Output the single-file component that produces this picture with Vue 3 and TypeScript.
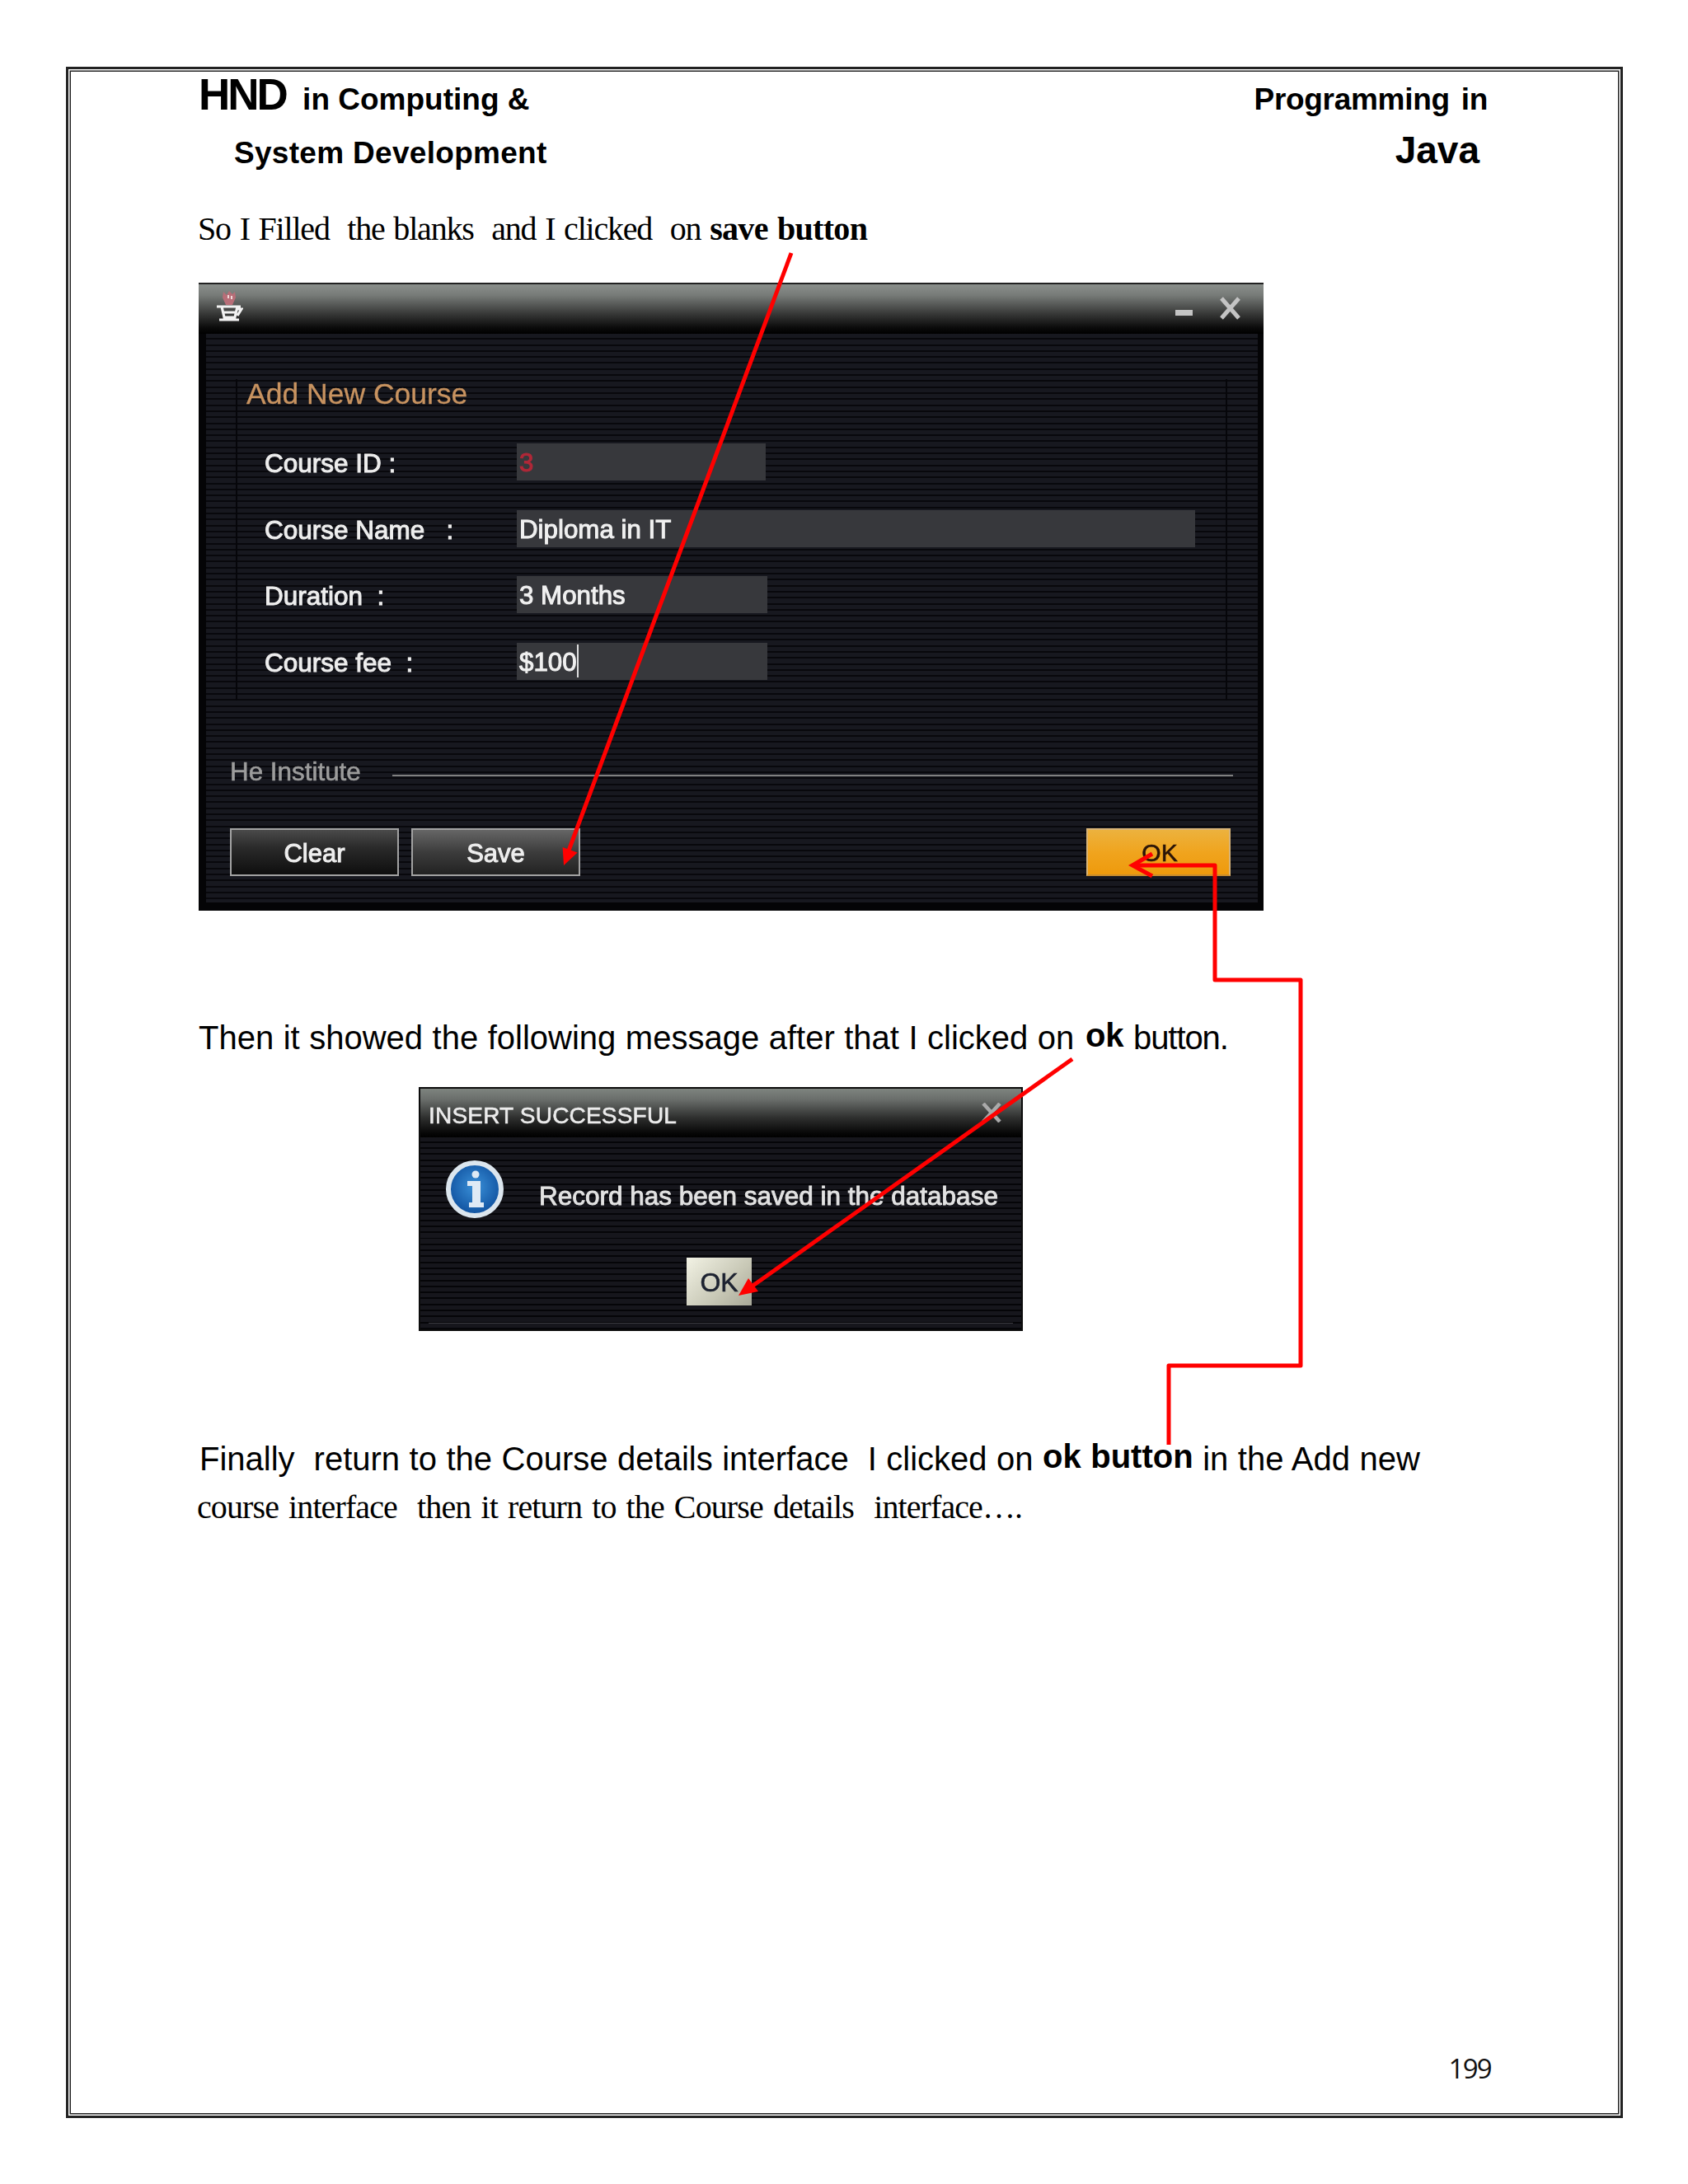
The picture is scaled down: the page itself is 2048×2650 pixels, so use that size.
<script setup lang="ts">
interface Field { label: string; value: string; kind: string }
const fields: Field[] = [
  { label: 'Course ID :', value: '3', kind: 'id' },
  { label: 'Course Name   :', value: 'Diploma in IT', kind: 'wide' },
  { label: 'Duration  :', value: '3 Months', kind: 'plain' },
  { label: 'Course fee  :', value: '$100', kind: 'caret' },
]
const line1 = 'So I Filled  the blanks  and I clicked  on '
const line3 = 'Finally  return to the Course details interface  I clicked on '
const line4 = 'course interface  then it return to the Course details  interface….'
</script>

<template>
  <div class="page">
    <div class="frame">
      <header class="head">
        <div class="hl1"><span class="hnd">HND</span><span class="hs"> in Computing &amp;</span></div>
        <div class="hr1">Programming in</div>
        <div class="hl2">System Development</div>
        <div class="hr2">Java</div>
      </header>

      <main class="body">
        <p class="serif p1">{{ line1 }}<b>save button</b></p>

        <section class="win">
          <div class="bar">
            <svg class="cup" viewBox="0 0 32 40" width="32" height="40">
              <path d="M8 2l4 4 3-5 4 4 3-3 1 7-4 9h-8l-4-9z" fill="#b86e78" />
              <path d="M13 6h2v4h-2zM17 7h2v4h-2z" fill="#f0d8d8" />
              <path d="M0 20H29M6 20l3 13h13l3-13M25 23h5l-5 8M9 27h13M3 36h24" stroke="#f2f2f2" stroke-width="3.200" fill="none" />
            </svg>
            <div class="ctrls">
              <span class="min"></span>
              <svg width="27" height="28" viewBox="0 0 27 28"><path d="M3 2l21 24M24 2L3 26" stroke="#c4c4c4" stroke-width="5" /></svg>
            </div>
          </div>
          <div class="win-body">
            <div class="fs">
              <h2 class="legend">Add New Course</h2>
              <div class="rows">
                <div v-for="f in fields" :key="f.label" class="row">
                  <span class="lab">{{ f.label }}</span>
                  <span class="inp" :class="f.kind"><span class="val">{{ f.value }}</span></span>
                </div>
              </div>
            </div>
            <div class="inst"><span>He Institute</span><i></i></div>
            <div class="btns">
              <span class="btn clear">Clear</span>
              <span class="btn save">Save</span>
              <span class="btn ok">OK</span>
            </div>
          </div>
        </section>

        <p class="sans p2">Then it showed the following message after that I clicked on <b class="up ok2">ok</b> <span class="tight">button.</span></p>

        <section class="dlg">
          <div class="dbar">
            <span>INSERT SUCCESSFUL</span>
            <svg width="24" height="24" viewBox="0 0 24 24"><path d="M2 1l20 22M22 1L2 23" stroke="#aaa" stroke-width="4.500" /></svg>
          </div>
          <div class="msg">
            <svg class="info" viewBox="0 0 70 70" width="70" height="70">
              <defs>
                <radialGradient id="ib" cx="50%" cy="45%" r="55%">
                  <stop offset="0" stop-color="#3a90d8" />
                  <stop offset="1" stop-color="#0f509e" />
                </radialGradient>
              </defs>
              <ellipse cx="35" cy="35" rx="32" ry="32" fill="url(#ib)" stroke="#dce6ee" stroke-width="6" />
              <circle cx="36" cy="17" r="4.500" fill="#dfeaf5" />
              <path d="M26 25h16v26h4v6H28v-6h4V31h-6z" fill="#dfeaf5" />
            </svg>
            <span>Record has been saved in the database</span>
          </div>
          <span class="dok">OK</span>
          <div class="dfoot"></div>
        </section>

        <p class="sans p3">{{ line3 }}<b class="up">ok button</b> in the Add new</p>
        <p class="serif p4">{{ line4 }}</p>
      </main>

      <footer class="pn">199</footer>
    </div>

    <svg class="arrows" width="2048" height="2650" viewBox="0 0 2048 2650">
      <path d="M960 307L690 1032" stroke="#f00" stroke-width="5" fill="none" />
      <path d="M684 1050l-1.400-22 18 6.500z" fill="#f00" />
      <path d="M1418 1753V1657H1578V1189H1474V1050H1376" stroke="#f00" stroke-width="5" fill="none" stroke-linejoin="round" />
      <path d="M1398 1036l-24 14 24 13" stroke="#f00" stroke-width="5" fill="none" />
      <path d="M1301 1285L912 1561" stroke="#f00" stroke-width="5" fill="none" />
      <path d="M896 1572l12-21 12 16z" fill="#f00" />
    </svg>
  </div>
</template>

<style>
html, body { margin: 0; background: #fff; }
</style>

<style scoped>
.page {
  position: relative;
  width: 2048px;
  height: 2650px;
  background: #fff;
  color: #000;
  padding: 81px 0 0 80px;
  box-sizing: border-box;
  font-family: "Liberation Sans", Arial, sans-serif;
}
.frame {
  width: 1889px;
  height: 2489px;
  box-sizing: border-box;
  border: 3px solid #222;
  padding: 3px;
  box-shadow: inset 0 0 0 1.500px #fff, inset 0 0 0 3px #222;
  display: flex;
  flex-direction: column;
}
.head {
  display: grid;
  grid-template-columns: 1fr auto;
  align-items: baseline;
  row-gap: 18px;
  padding: 1px 158px 0 158px;
  font-weight: 700;
  font-size: 37px;
  line-height: 37px;
}
.hl1, .hr1, .hl2, .hr2 { white-space: pre; }
.hnd { font-size: 53px; line-height: 53px; letter-spacing: -3px; margin: 0 10px 0 -3px; }
.hl2 { padding-left: 40px; letter-spacing: 0.3px; }
.hr1 { justify-self: end; word-spacing: 4px; letter-spacing: -0.3px; }
.hr2 { justify-self: end; margin-right: 10px; font-size: 46px; line-height: 46px; }
.body { padding: 0 0 0 154px; }
p { margin: 0; white-space: pre; }
.serif { font-family: "Liberation Serif", "Times New Roman", serif; font-size: 40px; line-height: 44px; }
.sans { font-family: "Liberation Sans", Arial, sans-serif; font-size: 40px; line-height: 44px; }
.up { position: relative; top: -3px; }
.p1 { margin-top: 51px; letter-spacing: -1.200px; word-spacing: 2px; }
.p1 b { letter-spacing: -0.7px; }
.p2 { margin-top: 132px; margin-left: 1px; word-spacing: 0.4px; }
.ok2 { margin-left: 2px; }
.tight { letter-spacing: -1.100px; }
.p3 { margin-top: 133px; margin-left: 2px; word-spacing: 0.4px; }
.p4 { margin-top: 15px; margin-left: -1px; letter-spacing: -0.9px; word-spacing: 3px; }

.win {
  margin: 43px 0 0 1px;
  width: 1292px;
  height: 762px;
  box-sizing: border-box;
  background: #0a0a0e;
  border-top: 2px solid #222;
  color: #e6e6e6;
  filter: blur(0.6px);
  display: flex;
  flex-direction: column;
}
.bar {
  height: 60px;
  flex: none;
  display: flex;
  justify-content: space-between;
  align-items: flex-start;
  padding: 7px 27px 0 22px;
  box-sizing: border-box;
  background: linear-gradient(#8a8f8b 0, #777b78 22%, #3a3b3a 58%, #0a0a0a 88%, #000 100%);
}
.ctrls { display: flex; align-items: flex-start; gap: 32px; padding-top: 8px; }
.min { width: 21px; height: 7px; background: #c4c4c4; margin-top: 16px; }
.win-body {
  flex: 1;
  box-sizing: border-box;
  border-left: 9px solid #040406;
  border-right: 7px solid #040406;
  border-bottom: 10px solid #040406;
  padding: 0 30px 0 29px;
  background: repeating-linear-gradient(#17181f 0 5.300px, #08080c 5.300px 7.300px);
}
.fs {
  margin: 55px 7px 0;
  height: 390px;
  box-sizing: border-box;
  border-left: 2px solid #06060a;
  border-right: 2px solid #06060a;
  padding-left: 11px;
}
.legend {
  margin: 0;
  padding-top: 1px;
  font-size: 35.500px;
  line-height: 35px;
  font-weight: 400;
  color: #c89360;
  -webkit-text-stroke: 0.3px #c89360;
}
.rows {
  margin-top: 42px;
  padding-left: 22px;
  display: flex;
  flex-direction: column;
  gap: 35.500px;
}
.row { display: flex; align-items: center; height: 45px; }
.lab {
  width: 306px;
  flex: none;
  padding-top: 4px;
  font-size: 31.500px;
  white-space: pre;
  color: #eee;
  -webkit-text-stroke: 1px #eee;
}
.inp {
  height: 45px;
  width: 304px;
  box-sizing: border-box;
  background: #37383c;
  font-size: 31.300px;
  line-height: 48px;
  padding-left: 3px;
  color: #f0f0f0;
  -webkit-text-stroke: 1px #f0f0f0;
}
.inp.id { width: 302px; color: #b02838; -webkit-text-stroke: 1px #b02838; }
.inp.wide { width: 823px; }
.inp.caret .val { display: inline-block; height: 40px; line-height: 44px; border-right: 2px solid #ddd; }
.inst {
  margin-top: 72px;
  display: flex;
  align-items: center;
  gap: 38px;
  font-size: 31.400px;
  line-height: 30px;
  color: #9c9c9c;
  -webkit-text-stroke: 0.6px #9c9c9c;
}
.inst i { flex: 1; height: 2px; background: #808080; margin-top: 8px; }
.btns { margin-top: 53px; display: flex; gap: 15px; }
.btn {
  height: 58px;
  width: 205px;
  box-sizing: border-box;
  border: 2px solid #a2a2a2;
  font-size: 31px;
  line-height: 58px;
  text-align: center;
  color: #eee;
  -webkit-text-stroke: 1px #eee;
}
.clear { background: linear-gradient(#4a4a4a, #2a2a2a 40%, #0e0e0e); }
.save { background: linear-gradient(#666, #3c3c3c 50%, #222); }
.ok {
  margin: 0 3px 0 auto;
  width: 175px;
  padding-left: 3px;
  border: 2px solid #d8b478;
  border-bottom-color: #c98d2c;
  background: linear-gradient(#ecb23e, #f0a41e 50%, #ee9a0c);
  color: #2a1408;
  -webkit-text-stroke: 0.6px #2a1408;
  font-size: 30px;
  line-height: 56px;
}

.dlg {
  margin: 38px 0 0 268px;
  width: 733px;
  height: 296px;
  box-sizing: border-box;
  border: 2px solid #0c0c0c;
  background: repeating-linear-gradient(#16161c 0 5.300px, #050508 5.300px 7.300px);
  color: #e2e2e2;
  filter: blur(0.6px);
}
.dbar {
  height: 59px;
  box-sizing: border-box;
  padding: 19px 24px 0 10px;
  display: flex;
  justify-content: space-between;
  align-items: flex-start;
  background: linear-gradient(#7e847f 0, #6a6e6b 22%, #2e2f2e 60%, #060606 92%, #000);
  font-size: 28px;
  line-height: 28px;
  letter-spacing: 0.2px;
  color: #ececec;
  -webkit-text-stroke: 0.6px #ececec;
}
.dbar svg { margin-top: -2px; }
.msg {
  margin-top: 28px;
  padding-left: 31px;
  height: 70px;
  display: flex;
  align-items: flex-start;
  gap: 43px;
  font-size: 31.500px;
  line-height: 32px;
  white-space: nowrap;
}
.info { flex: none; }
.msg span { margin-top: 27px; -webkit-text-stroke: 0.9px #e2e2e2; }
.dok {
  display: block;
  margin: 48px 0 0 323px;
  width: 79px;
  height: 58px;
  box-sizing: border-box;
  background: linear-gradient(135deg, #f2f2e4, #c8c8b6 60%, #a8a898);
  color: #1c2230;
  -webkit-text-stroke: 0.6px #1c2230;
  font-size: 32px;
  line-height: 60px;
  text-align: center;
}
.dfoot { height: 1px; margin: 21px 10px 0; background: #3a3a40; }

.pn {
  margin-top: auto;
  align-self: flex-end;
  padding: 0 154px 34px 0;
  font-family: "Open Sans", sans-serif;
  font-size: 33px;
  line-height: 40px;
  letter-spacing: -1.700px;
  color: #111;
}
.arrows { position: absolute; left: 0; top: 0; pointer-events: none; }
</style>
